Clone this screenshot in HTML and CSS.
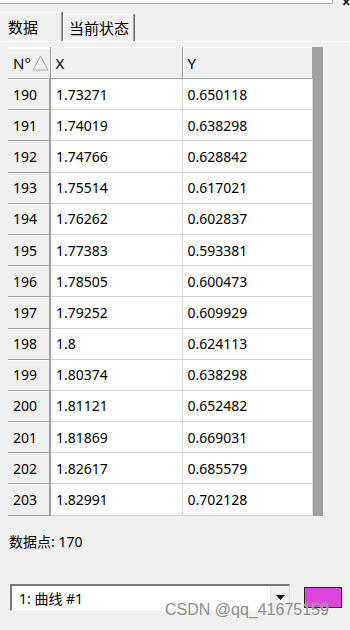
FILE: index.html
```html
<!DOCTYPE html>
<html lang="zh-CN">
<head>
    <meta charset="UTF-8">
    <title>数据</title>
    <link rel="stylesheet" href="styles.css">
</head>
<body>
    <div class="titlebar">
        <div class="titlebar-line"></div>
        <svg class="close" width="7" height="6" viewBox="0 0 7 6"><path d="M0.5 -1 L6 5 M6 -1 L0.5 5" stroke="#111" stroke-width="1.6"/></svg>
    </div>

    <div class="tabs">
        <div class="tab active">数据</div>
        <div class="tab">当前状态</div>
    </div>

    <div class="panel">
        <div class="grid-wrap">
            <table class="grid">
                <thead>
                    <tr>
                        <th class="rowhead">N°<svg class="sort" width="17" height="16" viewBox="0 0 17 16"><polygon points="8.5,1 16,15 1,15" fill="none" stroke="#a8a8a8" stroke-width="1"/></svg></th>
                        <th class="col-x">X</th>
                        <th class="col-y">Y</th>
                    </tr>
                </thead>
                <tbody>
                    <tr><th class="rowhead">190</th><td>1.73271</td><td>0.650118</td></tr>
                    <tr><th class="rowhead">191</th><td>1.74019</td><td>0.638298</td></tr>
                    <tr><th class="rowhead">192</th><td>1.74766</td><td>0.628842</td></tr>
                    <tr><th class="rowhead">193</th><td>1.75514</td><td>0.617021</td></tr>
                    <tr><th class="rowhead">194</th><td>1.76262</td><td>0.602837</td></tr>
                    <tr><th class="rowhead">195</th><td>1.77383</td><td>0.593381</td></tr>
                    <tr><th class="rowhead">196</th><td>1.78505</td><td>0.600473</td></tr>
                    <tr><th class="rowhead">197</th><td>1.79252</td><td>0.609929</td></tr>
                    <tr><th class="rowhead">198</th><td>1.8</td><td>0.624113</td></tr>
                    <tr><th class="rowhead">199</th><td>1.80374</td><td>0.638298</td></tr>
                    <tr><th class="rowhead">200</th><td>1.81121</td><td>0.652482</td></tr>
                    <tr><th class="rowhead">201</th><td>1.81869</td><td>0.669031</td></tr>
                    <tr><th class="rowhead">202</th><td>1.82617</td><td>0.685579</td></tr>
                    <tr><th class="rowhead">203</th><td>1.82991</td><td>0.702128</td></tr>
                </tbody>
            </table>
            <div class="vscroll"></div>
        </div>

        <div class="count">数据点: 170</div>

        <div class="bottom">
            <div class="combo">
                <span class="combo-text">1: 曲线 #1</span>
                <div class="combo-btn">
                    <svg width="9" height="5" viewBox="0 0 9 5"><polygon points="0,0 9,0 4.5,5" fill="#111"/></svg>
                </div>
            </div>
            <div class="swatch"></div>
        </div>
    </div>

    <div class="watermark">CSDN @qq_41675159</div>
</body>
</html>
```

FILE: styles.css
```css
body {
    margin: 0;
    background-color: #f0f0f0;
    font-family: "Noto Sans", "Noto Sans CJK SC", sans-serif;
    font-size: 14px;
    color: #000;
    width: 350px;
    height: 630px;
    overflow: hidden;
    position: relative;
}
.titlebar {
    display: flex;
    align-items: flex-start;
    height: 12px;
}
.titlebar-line {
    width: 332px;
    height: 3px;
    background-color: #fbfbfb;
    border-bottom: 1px solid #a8a8a8;
    border-right: 1px solid #a8a8a8;
    border-bottom-right-radius: 2px;
}
.close {
    margin-left: 10px;
    display: block;
}
.tabs {
    display: flex;
    align-items: flex-end;
    height: 29px;
}
.tab {
    box-sizing: border-box;
    height: 27px;
    padding: 2px 5px 0 5px;
    font-size: 15px;
    line-height: 22px;
    white-space: nowrap;
    border-top: 1px solid #fff;
    border-left: 1px solid #fff;
    border-right: 1px solid #a0a0a0;
    box-shadow: 1px 0 0 #696969;
}
.tab.active {
    width: 62px;
    height: 29px;
    padding: 3px 0 0 8px;
    border-left: none;
}
.tab + .tab {
    width: 71px;
    margin-left: 1px;
}
.panel {
    border-top: 1px solid #fff;
    padding: 5px 0 0 8px;
}
.grid-wrap {
    display: flex;
}
.grid {
    border-collapse: collapse;
    table-layout: fixed;
    width: 305px;
    background-color: #fff;
}
.grid th, .grid td {
    box-sizing: border-box;
    height: 31.2px;
    padding: 0 0 0 5px;
    text-align: left;
    font-weight: normal;
    white-space: nowrap;
}
.grid thead th {
    height: 31px;
    font-size: 15px;
    background-color: #f0f0f0;
    border-top: 1px solid #fff;
    border-bottom: 1px solid #a0a0a0;
    border-right: 1px solid #a0a0a0;
    box-shadow: inset 1px 0 0 #fff;
}
.grid .rowhead {
    width: 42px;
    background-color: #f0f0f0;
    border-right: 2px solid #a0a0a0;
    border-bottom: 1px solid #a0a0a0;
    box-shadow: inset 0 1px 0 #fff;
}
.grid thead .rowhead {
    border-right: 1px solid #a0a0a0;
}
.sort {
    vertical-align: -2px;
    margin-left: 1px;
}
.col-x {
    width: 132px;
}
.grid td {
    border-right: 1px solid #d6d6d6;
    border-bottom: 1px solid #d6d6d6;
}
.vscroll {
    width: 10px;
    background-color: #a0a0a0;
}
.count {
    margin-top: 16px;
    padding-left: 1px;
    line-height: 20px;
}
.bottom {
    display: flex;
    align-items: flex-start;
    margin-top: 32px;
    padding-left: 2px;
}
.combo {
    box-sizing: border-box;
    width: 280px;
    height: 27px;
    display: flex;
    background-color: #fff;
    border-top: 2px solid #7a7a7a;
    border-left: 2px solid #7a7a7a;
    border-right: 1px solid #dcdcdc;
    border-bottom: 1px solid #f8f8f8;
}
.combo-text {
    flex: 1;
    padding-left: 7px;
    line-height: 25px;
}
.combo-btn {
    width: 18px;
    display: flex;
    align-items: center;
    justify-content: center;
    background-color: #f0f0f0;
    border-left: 1px solid #e4e4e4;
}
.swatch {
    box-sizing: border-box;
    width: 38px;
    height: 21px;
    margin: 3px 0 0 14px;
    background-color: #dd44dd;
    border: 1px solid #222;
}
.watermark {
    position: absolute;
    left: 165px;
    top: 601px;
    font-family: "Liberation Sans", Arial, sans-serif;
    font-size: 16px;
    color: #8c8c8c;
    text-shadow: 0 0 1px #fff;
}
```
